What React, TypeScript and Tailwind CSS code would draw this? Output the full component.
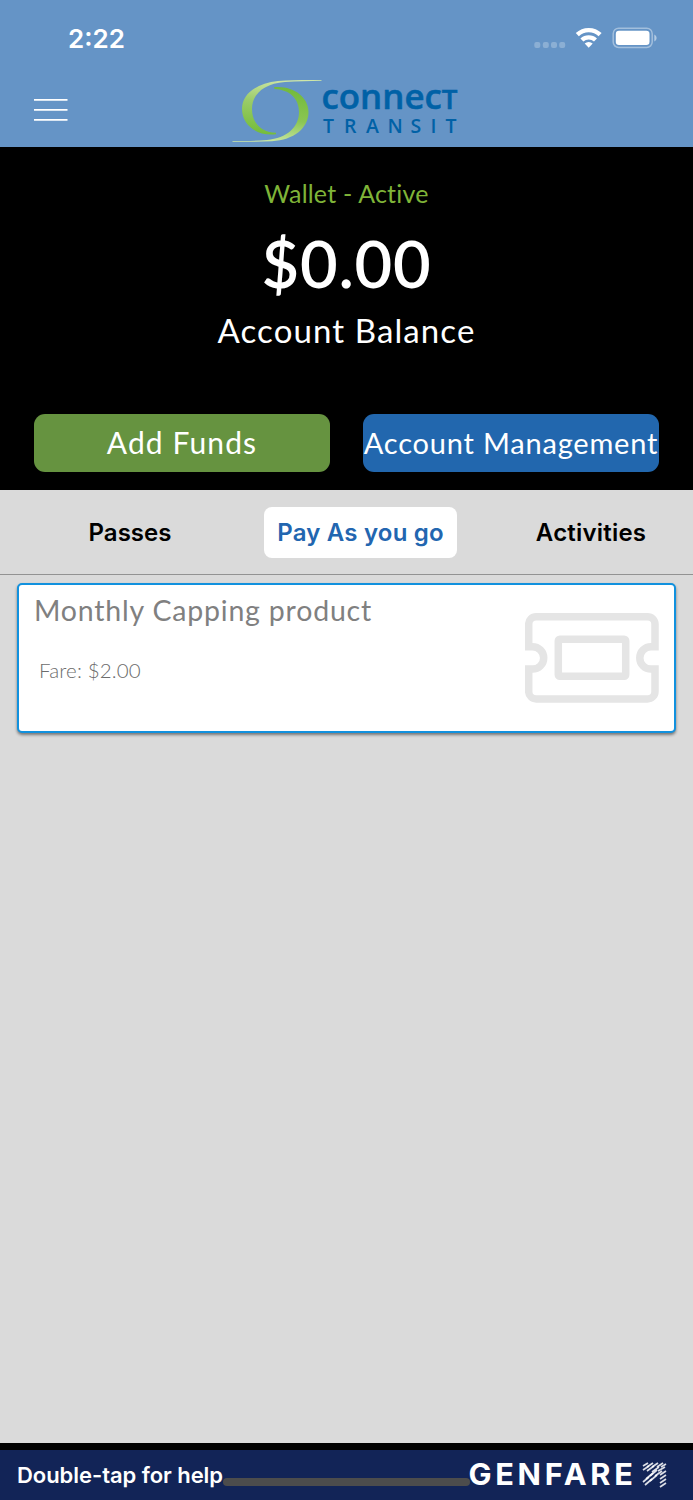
import clsx from "clsx";

const tabs = [
  { label: "Passes", className: "w-[259px] pr-[9px] text-black", active: false },
  { label: "Pay As you go", className: "w-[193px] rounded-lg bg-white tracking-[0.2px] text-[#2266b0]", active: true },
  { label: "Activities", className: "w-[241px] pl-[27px] tracking-[0.2px] text-black", active: false }
];

function StatusBar() {
  return (
    <div className="flex h-[76px] items-center justify-between pl-[68px] pr-[36px] font-['Inter',sans-serif]">
      <span className="mt-px text-[26px] font-semibold leading-none text-white">2:22</span>
      <svg width="124" height="26" viewBox="533 25 124 26">
        <g fill="#fff" fillOpacity="0.25">
          <rect x="534.3" y="42" width="6" height="6" rx="2" />
          <rect x="542.8" y="42" width="6" height="6" rx="2" />
          <rect x="551" y="42" width="6" height="6" rx="2" />
          <rect x="559.2" y="42" width="6" height="6" rx="2" />
        </g>
        <g fill="none" stroke="#fff" strokeWidth="4.4">
          <path d="M577.3 34.7a16.4 16.4 0 0 1 22.8 0" />
          <path d="M581.9 40a10 10 0 0 1 13.6 0" />
        </g>
        <path d="M588.7 47.8l-4-4.2a5.9 5.9 0 0 1 8 0z" fill="#fff" />
        <rect x="613.2" y="28.2" width="39" height="19.3" rx="5.5" fill="none" stroke="#fff" strokeOpacity="0.4" strokeWidth="1.5" />
        <rect x="615.8" y="30.8" width="33.7" height="14.2" rx="3.2" fill="#fff" />
        <path d="M654.3 34.5c3 1.5 3 5.7 0 7z" fill="#fff" fillOpacity="0.5" />
      </svg>
    </div>
  );
}

function ConnectLogo() {
  return (
    <svg width="228" height="68" viewBox="231 77 228 68" aria-label="Connect Transit">
      <defs>
        <linearGradient id="swooshLeft" x1="0.6" y1="0" x2="0.4" y2="1">
          <stop offset="0" stopColor="#cfe7a8" />
          <stop offset="0.45" stopColor="#9bcc69" />
          <stop offset="1" stopColor="#76bd3b" />
        </linearGradient>
        <linearGradient id="swooshRight" x1="0.6" y1="0" x2="0.4" y2="1">
          <stop offset="0" stopColor="#73ba3c" />
          <stop offset="0.55" stopColor="#8bc653" />
          <stop offset="1" stopColor="#cce8a6" />
        </linearGradient>
      </defs>
      <path
        d="M321.5 80C306 79.8 290 80 278 81C256 83.5 242 94 242 109C242 125 257 136.5 276 134.2L276 132.8C261 132 252 123 252 109C252 94 264 83.5 285 81.9C297 81.2 310 81.2 321.5 80.8Z"
        fill="url(#swooshLeft)"
      />
      <path
        d="M274 87.3C293 85.5 308.5 97 308.5 112C308.5 128 294 140 272 141.2C259 141.9 246 141.8 232.5 141.7L232.5 141.1C245 140.8 257 141 267 140C287 138 299 127 299 112C299 98 289 89.6 274.5 89Z"
        fill="url(#swooshRight)"
      />
      <g fill="#0061a6" fontFamily="'Open Sans', sans-serif">
        <text
          x="321.5"
          y="108.9"
          fontSize="34.5"
          fontWeight="600"
          stroke="#0061a6"
          strokeWidth="0.5"
          textLength="136"
          lengthAdjust="spacingAndGlyphs"
        >
          connec<tspan fontSize="27.5">T</tspan>
        </text>
        <text x="323 344 366 387.5 410.5 430.5 445.5" y="132.5" fontSize="19.5" fontWeight="600">
          TRANSIT
        </text>
      </g>
    </svg>
  );
}

function Header() {
  return (
    <header className="h-[147px] bg-[#6594c6]">
      <StatusBar />
      <div className="flex pl-[34px] pt-px">
        <svg className="mt-[21px]" width="34" height="24" viewBox="0 0 34 24" aria-label="Menu">
          <path d="M0 1.8h33.5M0 11.8h33.5M0 21.8h33.5" stroke="#fff" strokeWidth="1.7" />
        </svg>
        <div className="ml-[163px]">
          <ConnectLogo />
        </div>
      </div>
    </header>
  );
}

function Wallet() {
  return (
    <section className="flex h-[343px] flex-col items-center bg-black text-white">
      <p className="mt-[31px] text-[25px] leading-[30px] tracking-[0.2px] text-[#7fb438]">Wallet - Active</p>
      <p className="mt-[20px] text-[65px] font-semibold leading-[70px] tracking-[0.8px]">$0.00</p>
      <p className="mt-[12px] text-[33px] leading-[40px] tracking-[1.1px]">Account Balance</p>
      <div className="mt-[64px] flex w-full justify-between px-[34px]">
        <button className="h-[58px] w-[296px] rounded-[11px] bg-[#669340] pb-[2px] text-[30px] tracking-[1.1px]">
          Add Funds
        </button>
        <button className="flex h-[58px] w-[296px] items-center justify-center whitespace-nowrap rounded-[11px] bg-[#2267ae] text-[29px] tracking-[0.8px]">
          Account Management
        </button>
      </div>
    </section>
  );
}

function Tabs() {
  return (
    <nav className="flex h-[85px] items-center border-b border-[#929292] pl-[5px] font-['Inter',sans-serif] text-[24px] font-semibold">
      {tabs.map((tab) => (
        <button
          key={tab.label}
          aria-pressed={tab.active}
          className={clsx("h-[51px] shrink-0 whitespace-nowrap pt-[2px] text-center", tab.className)}
        >
          {tab.label}
        </button>
      ))}
    </nav>
  );
}

function TicketIcon() {
  return (
    <svg width="134" height="90" viewBox="525.5 613 134 90" fill="none" stroke="#e5e5e5" strokeWidth="7.5">
      <path d="M529.2 646.7V624.3a7.5 7.5 0 0 1 7.5-7.5H648a7.5 7.5 0 0 1 7.5 7.5V646.7H651.5a11.2 11.2 0 0 0 0 22.4H655.5V691.4a7.5 7.5 0 0 1-7.5 7.5H536.7a7.5 7.5 0 0 1-7.5-7.5V669.1H533a11.2 11.2 0 0 0 0-22.4Z" />
      <rect x="558.8" y="639.3" width="67.4" height="37" rx="1.5" />
    </svg>
  );
}

function ProductCard() {
  return (
    <div className="mx-[17px] mt-[8px] flex h-[150px] justify-between rounded-[5px] border-2 border-[#1191de] bg-white pl-[15px] pr-[15px] shadow-[0_2px_3px_rgba(0,0,0,0.45)]">
      <div className="text-[#808080]">
        <h2 className="mt-[8px] text-[28.5px] leading-[34px] tracking-[0.8px]">Monthly Capping product</h2>
        <p className="ml-[5px] mt-[31px] text-[20.5px] font-light leading-[24px] tracking-[0.15px] text-[#6c6c6c]">
          Fare: $2.00
        </p>
      </div>
      <div className="mt-[28px]">
        <TicketIcon />
      </div>
    </div>
  );
}

function GenfareMark() {
  return (
    <svg width="200" height="30" viewBox="468 1459 200 30" aria-label="Genfare">
      <text
        x="468.5"
        y="1484.5"
        fill="#fff"
        fontFamily="Inter, sans-serif"
        fontSize="30"
        fontWeight="700"
        letterSpacing="3.6"
        textLength="168"
        lengthAdjust="spacingAndGlyphs"
      >
        GENFARE
      </text>
      <g fill="none" stroke="#fff" strokeOpacity="0.85" strokeWidth="1.7">
        <path d="M643 1466l5-3M647 1467l6-4M652 1467l6-4M657 1467l6-4M661 1467l5-3" />
        <path d="M643 1470l6-4M647 1471l7-5M652 1472l7-5M658 1471l7-4" />
        <path d="M650 1476l7-6M655 1476l7-5M660 1475l6-4" />
        <path d="M646 1479l7-6M650 1481l7-6M660 1479l6-4" />
        <path d="M643 1482l6-5M645 1485l7-6" />
        <path d="M660 1483l6-4M660 1487l6-4" />
      </g>
    </svg>
  );
}

function Footer() {
  return (
    <footer className="flex h-[57px] items-center border-t-[7px] border-black bg-[#122457] pl-[17px]">
      <span className="w-[206px] whitespace-nowrap font-['Inter',sans-serif] text-[22px] font-semibold tracking-[-0.05px] text-white">
        Double-tap for help
      </span>
      <span className="mt-[14px] h-[8px] w-[247px] rounded-full bg-[#4c4c4c]" />
      <div className="-ml-[2px] -mt-[2px]">
        <GenfareMark />
      </div>
    </footer>
  );
}

export default function App() {
  return (
    <div className="flex h-[1500px] w-[693px] flex-col overflow-hidden bg-[#dadada] font-['Lato',sans-serif]">
      <Header />
      <Wallet />
      <Tabs />
      <main className="flex-1">
        <ProductCard />
      </main>
      <Footer />
    </div>
  );
}
